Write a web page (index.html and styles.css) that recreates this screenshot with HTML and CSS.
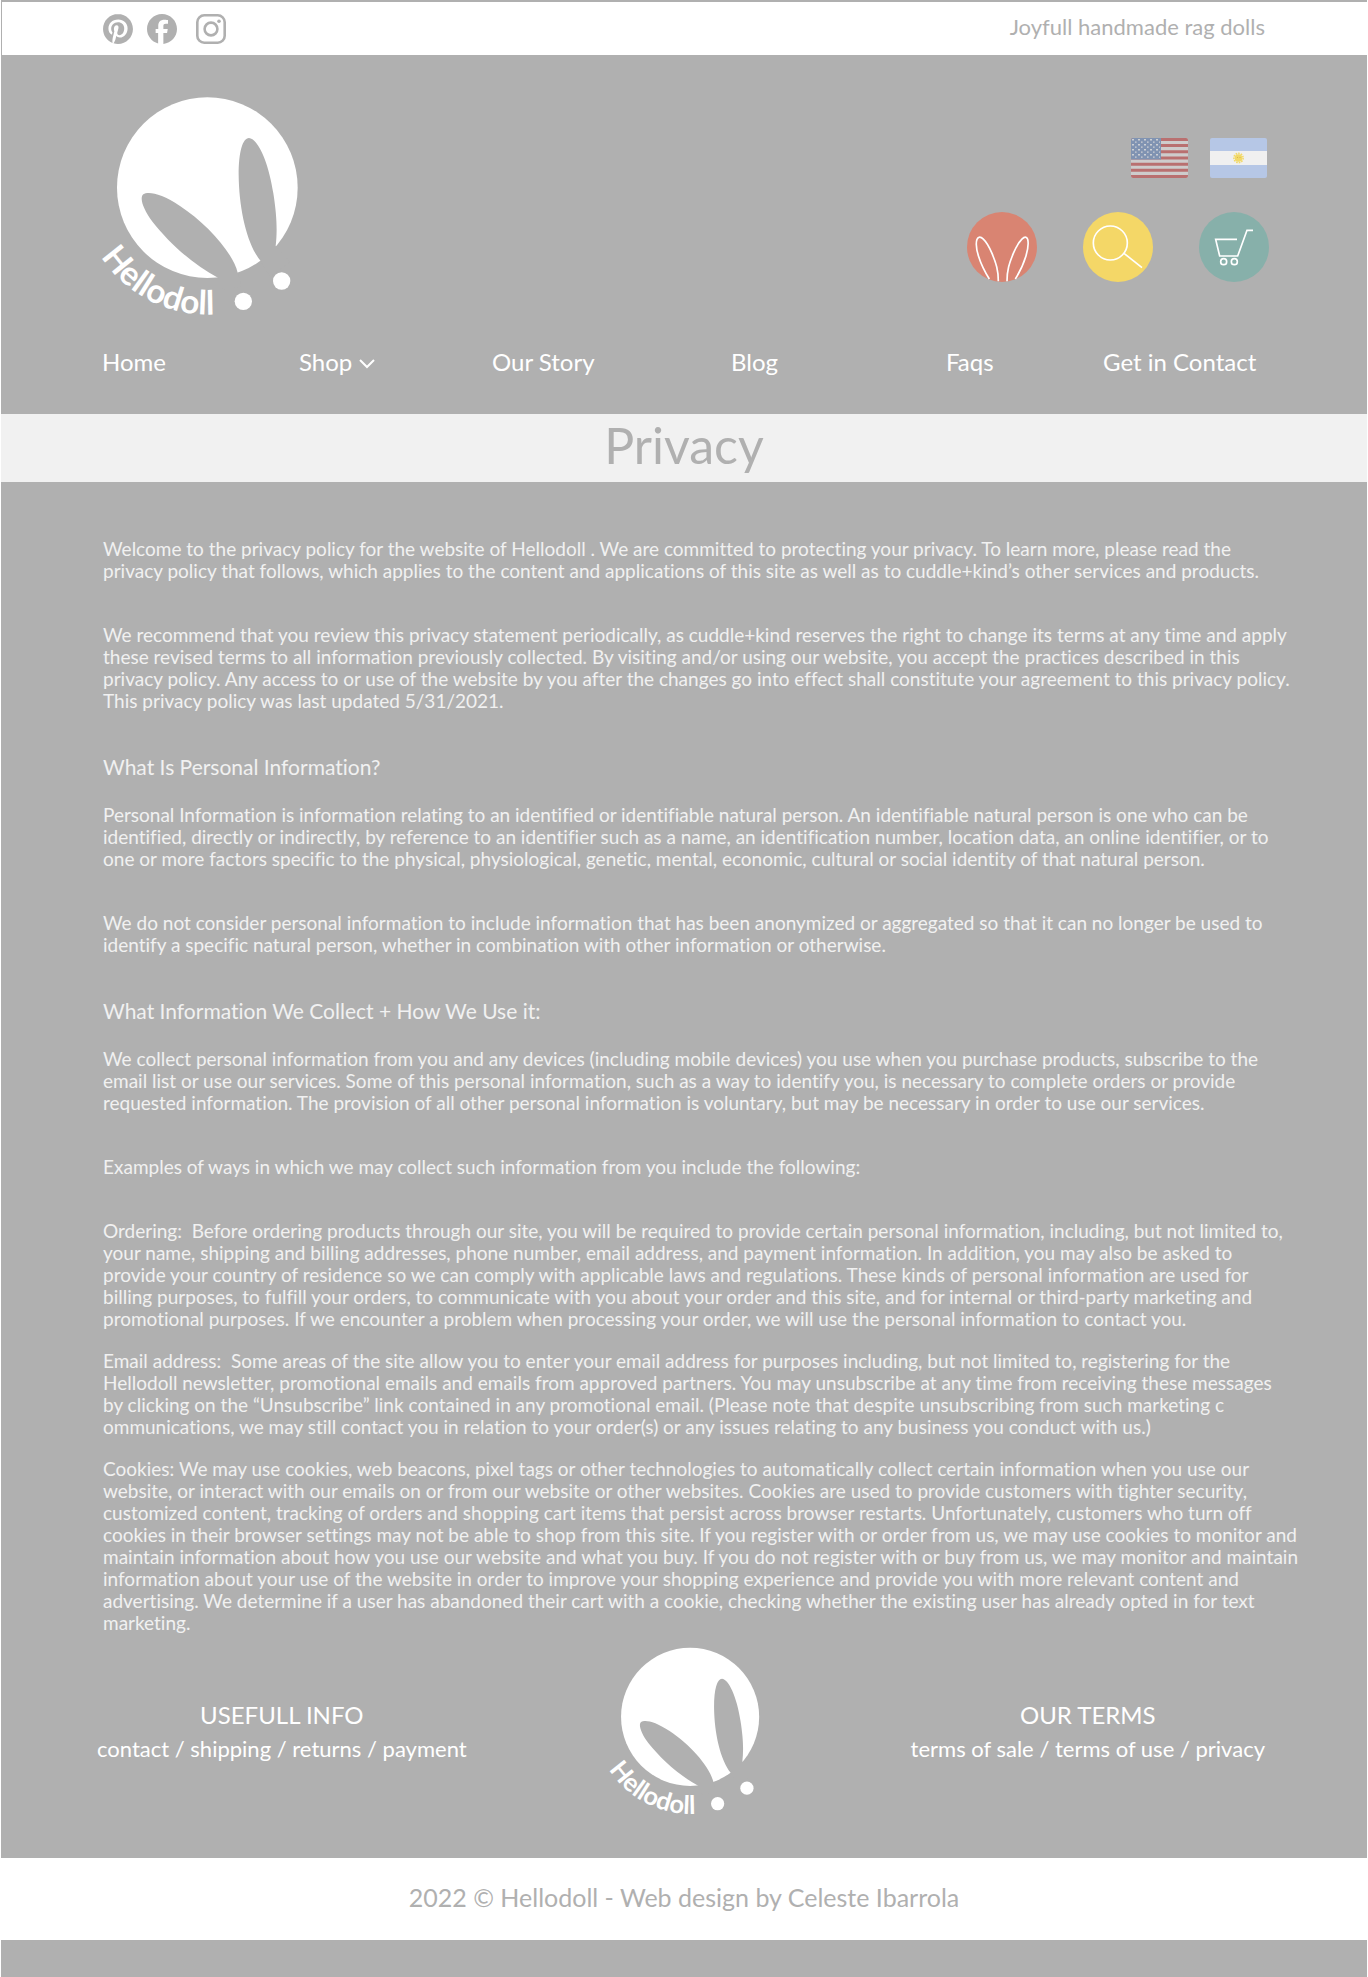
FILE: index.html
```html
<!DOCTYPE html>
<html lang="en">
<head>
<meta charset="utf-8">
<meta name="viewport" content="width=device-width, initial-scale=1">
<title>Privacy - Hellodoll</title>
<link rel="stylesheet" href="styles.css">
</head>
<body>
<div class="topbar">
  <div class="social">
    <a href="#" aria-label="Pinterest"><svg width="30" height="30" viewBox="0 0 24 24"><path d="M12.017 0C5.396 0 .029 5.367.029 11.987c0 5.079 3.158 9.417 7.618 11.162-.105-.949-.199-2.403.041-3.439.219-.937 1.406-5.957 1.406-5.957s-.359-.72-.359-1.781c0-1.663.967-2.911 2.168-2.911 1.024 0 1.518.769 1.518 1.688 0 1.029-.653 2.567-.992 3.992-.285 1.193.6 2.165 1.775 2.165 2.128 0 3.768-2.245 3.768-5.487 0-2.861-2.063-4.869-5.008-4.869-3.41 0-5.409 2.562-5.409 5.199 0 1.033.394 2.143.889 2.741.099.12.112.225.085.345-.09.375-.293 1.199-.334 1.363-.053.225-.172.271-.401.165-1.495-.69-2.433-2.878-2.433-4.646 0-3.776 2.748-7.252 7.92-7.252 4.158 0 7.392 2.967 7.392 6.923 0 4.135-2.607 7.462-6.233 7.462-1.214 0-2.354-.629-2.758-1.379l-.749 2.848c-.269 1.045-1.004 2.352-1.498 3.146 1.123.345 2.306.535 3.55.535 6.607 0 11.985-5.365 11.985-11.987C23.97 5.39 18.592.026 11.985.026L12.017 0z"/></svg></a>
    <a href="#" aria-label="Facebook"><svg width="30" height="30" viewBox="0 0 24 24"><path d="M24 12.073c0-6.627-5.373-12-12-12s-12 5.373-12 12c0 5.5 3.7 10.1 8.9 11.54v-8.4H6.9v-3.2h2.1V9.43c0-3.3 1.9-4.9 4.9-4.9 1.312 0 2.9.235 2.9.235v3.05h-1.7c-1.491 0-2 .6-2 1.65v2.55h3.5l-.55 3.2h-2.95v8.75C19.4 23.4 24 18.1 24 12.073z"/></svg></a>
    <a href="#" aria-label="Instagram"><svg width="40" height="30" viewBox="0 0 40 30"><rect x="6.3" y="1.3" width="27.4" height="27.4" rx="7" fill="none" stroke="#b0b0b0" stroke-width="2.6"/><circle cx="20" cy="15" r="6.4" fill="none" stroke="#b0b0b0" stroke-width="2.6"/><circle cx="28" cy="7.2" r="1.8"/></svg></a>
  </div>
  <p class="tagline">Joyfull handmade rag dolls</p>
</div>

<header class="header">
  <div class="header-main">
    <a href="#" aria-label="Hellodoll"><svg class="logo" viewBox="30 45 600 675">
      <circle cx="352" cy="323" r="271"/>
      <path class="ear" d="M512 543C470 492 447 385 446 285C446 215 458 174 477 174C503 176 535 243 550 340C561 410 562 455 557 498L600 545L540 590Z"/>
      <path class="ear" d="M443 578C430 520 350 430 270 378C215 340 174 333 160 343C148 353 158 385 188 426C235 485 305 552 384 593L400 630L455 620Z"/>
      <circle cx="460" cy="664" r="26"/>
      <circle cx="575" cy="603" r="26"/>
      <path id="logo-arc" fill="none" d="M33 530A381 381 0 0 0 420 698"/>
      <text class="logo-text"><textPath href="#logo-arc">Hellodoll</textPath></text>
    </svg></a>
    <div class="tools">
      <div class="flags">
        <button type="button" aria-label="English"><svg width="57" height="40" viewBox="0 0 57 40">
          <defs><clipPath id="flag-clip"><rect width="57" height="40" rx="2"/></clipPath>
          <pattern id="stars" width="6" height="5" patternUnits="userSpaceOnUse"><path d="M1 1h2v1.4H1zM4 3.4h1.6v1.4H4z" fill="#cdd0d4"/></pattern></defs>
          <g clip-path="url(#flag-clip)"><path fill="#cecccc" d="M0 0h57v40H0z"/>
          <path stroke="#b97070" stroke-width="3" d="M0 1.5h57M0 7.6h57M0 13.8h57M0 20h57M0 26.2h57M0 32.3h57M0 38.5h57"/>
          <path fill="#8093b2" d="M0 0h30v21.5H0z"/><path fill="url(#stars)" d="M0 0h29v21H0z"/></g></svg></button>
        <button type="button" aria-label="Español"><svg width="57" height="40" viewBox="0 0 57 40">
          <g clip-path="url(#flag-clip)"><path fill="#b6c7e6" d="M0 0h57v40H0z"/><path fill="#f0f0f0" d="M0 13h57v14H0z"/>
          <circle cx="28.5" cy="20" r="3.8" fill="#f2d968"/><circle cx="28.5" cy="20" r="4.6" fill="none" stroke="#f2d968" stroke-width="1.6" stroke-dasharray="1.6 1"/><path fill="#d9b650" d="M27 19h1v1h-1zM29.5 19h1v1h-1z"/></g></svg></button>
      </div>
      <div class="actions">
        <button type="button" aria-label="Account"><svg class="disc" viewBox="0 0 210 210"><circle cx="105" cy="105" r="105" fill="#d98472"/><path d="M67 201C38 155 22 105 30 82C38 64 58 85 74 122C88 155 94 175 94 208M120 208C120 175 126 155 140 122C156 85 176 64 182 82C188 105 174 155 145 201"/></svg></button>
        <button type="button" aria-label="Search"><svg class="disc" viewBox="0 0 210 210"><circle cx="105" cy="105" r="105" fill="#f4d767"/><circle cx="82" cy="93" r="51" fill="none"/><path d="M123 124L177 167"/></svg></button>
        <button type="button" aria-label="Cart"><svg class="disc" viewBox="0 0 210 210"><circle cx="105" cy="105" r="105" fill="#87b0aa"/><path d="M114 82H50L62 132H116L144 55H162"/><circle cx="74" cy="149" r="9" fill="none"/><circle cx="106" cy="149" r="9" fill="none"/></svg></button>
      </div>
    </div>
  </div>
  <nav class="nav">
    <a href="#">Home</a>
    <a href="#">Shop <svg width="16" height="14" viewBox="0 0 16 14"><path d="M1 5L8 12L15 5" fill="none" stroke="#fff" stroke-width="2"/></svg></a>
    <a href="#">Our Story</a>
    <a href="#">Blog</a>
    <a href="#">Faqs</a>
    <a href="#">Get in Contact</a>
  </nav>
</header>

<div class="title-band"><h1>Privacy</h1></div>

<main class="policy">
  <p>Welcome to the privacy policy for the website of Hellodoll . We are committed to protecting your privacy. To learn more, please read the<br>
  privacy policy that follows, which applies to the content and applications of this site as well as to cuddle+kind’s other services and products.</p>
  <p>We recommend that you review this privacy statement periodically, as cuddle+kind reserves the right to change its terms at any time and apply<br>
  these revised terms to all information previously collected. By visiting and/or using our website, you accept the practices described in this<br>
  privacy policy. Any access to or use of the website by you after the changes go into effect shall constitute your agreement to this privacy policy.<br>
  This privacy policy was last updated 5/31/2021.</p>
  <h2>What Is Personal Information?</h2>
  <p>Personal Information is information relating to an identified or identifiable natural person. An identifiable natural person is one who can be<br>
  identified, directly or indirectly, by reference to an identifier such as a name, an identification number, location data, an online identifier, or to<br>
  one or more factors specific to the physical, physiological, genetic, mental, economic, cultural or social identity of that natural person.</p>
  <p>We do not consider personal information to include information that has been anonymized or aggregated so that it can no longer be used to<br>
  identify a specific natural person, whether in combination with other information or otherwise.</p>
  <h2>What Information We Collect + How We Use it:</h2>
  <p>We collect personal information from you and any devices (including mobile devices) you use when you purchase products, subscribe to the<br>
  email list or use our services. Some of this personal information, such as a way to identify you, is necessary to complete orders or provide<br>
  requested information. The provision of all other personal information is voluntary, but may be necessary in order to use our services.</p>
  <p>Examples of ways in which we may collect such information from you include the following:</p>
  <p>Ordering:&nbsp; Before ordering products through our site, you will be required to provide certain personal information, including, but not limited to,<br>
  your name, shipping and billing addresses, phone number, email address, and payment information. In addition, you may also be asked to<br>
  provide your country of residence so we can comply with applicable laws and regulations. These kinds of personal information are used for<br>
  billing purposes, to fulfill your orders, to communicate with you about your order and this site, and for internal or third-party marketing and<br>
  promotional purposes. If we encounter a problem when processing your order, we will use the personal information to contact you.</p>
  <p class="close">Email address:&nbsp; Some areas of the site allow you to enter your email address for purposes including, but not limited to, registering for the<br>
  Hellodoll newsletter, promotional emails and emails from approved partners. You may unsubscribe at any time from receiving these messages<br>
  by clicking on the “Unsubscribe” link contained in any promotional email. (Please note that despite unsubscribing from such marketing c<br>
  ommunications, we may still contact you in relation to your order(s) or any issues relating to any business you conduct with us.)</p>
  <p class="close">Cookies: We may use cookies, web beacons, pixel tags or other technologies to automatically collect certain information when you use our<br>
  website, or interact with our emails on or from our website or other websites. Cookies are used to provide customers with tighter security,<br>
  customized content, tracking of orders and shopping cart items that persist across browser restarts. Unfortunately, customers who turn off<br>
  cookies in their browser settings may not be able to shop from this site. If you register with or order from us, we may use cookies to monitor and<br>
  maintain information about how you use our website and what you buy. If you do not register with or buy from us, we may monitor and maintain<br>
  information about your use of the website in order to improve your shopping experience and provide you with more relevant content and<br>
  advertising. We determine if a user has abandoned their cart with a cookie, checking whether the existing user has already opted in for text<br>
  marketing.</p>
</main>

<footer>
  <div class="footer-main">
    <section class="footer-group">
      <h3>USEFULL INFO</h3>
      <p><a href="#">contact</a> / <a href="#">shipping</a> / <a href="#">returns</a> / <a href="#">payment</a></p>
    </section>
    <a href="#" aria-label="Hellodoll"><svg class="logo logo-small" viewBox="30 45 600 675">
      <circle cx="352" cy="323" r="271"/>
      <path class="ear" d="M512 543C470 492 447 385 446 285C446 215 458 174 477 174C503 176 535 243 550 340C561 410 562 455 557 498L600 545L540 590Z"/>
      <path class="ear" d="M443 578C430 520 350 430 270 378C215 340 174 333 160 343C148 353 158 385 188 426C235 485 305 552 384 593L400 630L455 620Z"/>
      <circle cx="460" cy="664" r="26"/>
      <circle cx="575" cy="603" r="26"/>
      <text class="logo-text"><textPath href="#logo-arc">Hellodoll</textPath></text>
    </svg></a>
    <section class="footer-group">
      <h3>OUR TERMS</h3>
      <p><a href="#">terms of sale</a> / <a href="#">terms of use</a> / <a href="#">privacy</a></p>
    </section>
  </div>
  <p class="copyright">2022 © Hellodoll - Web design by Celeste Ibarrola</p>
  <div class="footer-base"></div>
</footer>
</body>
</html>
```
FILE: styles.css
```css
* { box-sizing: border-box; }

body {
  margin: 0 1px;
  background: #fff;
  color: #fff;
  font-family: Lato, "Liberation Sans", sans-serif;
  font-size: 22px;
  font-variant-ligatures: none;
}

h1, h2, h3, p { margin: 0; font-weight: 400; }
a { color: inherit; text-decoration: none; }
svg { display: block; }
button { padding: 0; border: 0; background: none; cursor: pointer; }

/* Top bar */
.topbar {
  display: flex;
  justify-content: space-between;
  align-items: center;
  height: 55px;
  margin-right: -1px;
  padding: 0 102px 0 101px;
  border: 1px solid #b0b0b0;
  border-top-width: 2px;
  border-bottom: 0;
  background: #fff;
  color: #b0b0b0;
}
.social { display: flex; gap: 14px; fill: #b0b0b0; }
.tagline { padding-bottom: 4px; line-height: 26px; }

/* Header */
.header {
  padding: 40px 98px 37px 99px;
  background: #b0b0b0;
}
.header-main { display: flex; justify-content: space-between; align-items: flex-start; }
.logo { width: 200px; height: 225px; overflow: visible; fill: #fff; }
.logo-small { width: 153px; height: 172px; }
.ear { fill: #b0b0b0; }
.logo-text { font-size: 100px; font-weight: 700; }
.tools {
  display: flex;
  flex-direction: column;
  align-items: flex-end;
  gap: 34px;
  padding-top: 43px;
}
.flags { display: flex; gap: 22px; padding-right: 2px; }
.actions { display: flex; gap: 46px; }
.disc { width: 70px; height: 70px; fill: none; stroke: #fff; stroke-width: 5; }
.disc circle:first-child { stroke: none; }
.nav {
  display: grid;
  grid-template-columns: 197fr 193fr 239fr 215fr 157fr 166fr;
  margin-top: 27px;
  padding-left: 2px;
  font-size: 24px;
  line-height: 30px;
  white-space: nowrap;
}
.nav a { display: flex; align-items: center; gap: 7px; }

/* Page title */
.title-band {
  padding: 1px 0 7px;
  background: #f1f1f1;
  color: #b0b0b0;
  text-align: center;
}
.title-band h1 { font-size: 50px; line-height: 60px; }

/* Policy text */
.policy {
  padding: 56px 64px 0 102px;
  background: #b0b0b0;
  color: #f1f1f1;
  font-size: 19px;
  line-height: 22px;
}
.policy p + p { margin-top: 42px; }
.policy p + .close { margin-top: 20px; }
.policy h2 { margin: 43px 0 25px; font-size: 21px; line-height: 24px; }

/* Footer */
.footer-main {
  display: grid;
  grid-template-columns: 1fr auto 1fr;
  padding: 12px 102px 40px;
  background: #b0b0b0;
}
.footer-group {
  justify-self: start;
  margin-left: -6px;
  padding-top: 52px;
  text-align: center;
  line-height: 34px;
  white-space: nowrap;
}
.footer-group:last-child { justify-self: end; margin: 0; }
.footer-group h3 { font-size: 24px; }
.copyright {
  padding: 22px 0 26px;
  color: #b0b0b0;
  font-size: 25px;
  line-height: 34px;
  text-align: center;
}
.footer-base { height: 37px; background: #b0b0b0; }
```
